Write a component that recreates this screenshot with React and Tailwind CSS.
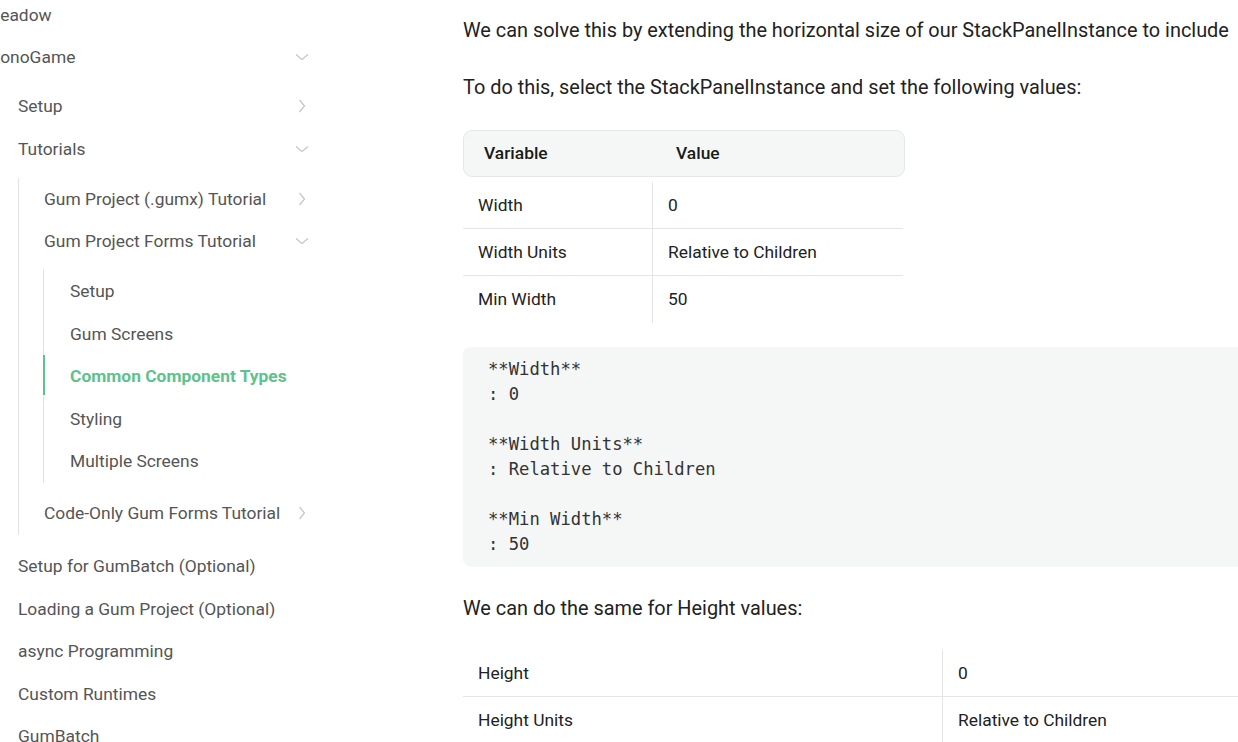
import React from 'react';

const font = { fontFamily: 'Roboto, "Liberation Sans", sans-serif' };

const ChevronDown = () => (
  <svg width="14" height="8" viewBox="0 0 14 8" fill="none" stroke="#c4c4c4" strokeWidth="1.2">
    <path d="M1 1.5l6 5 6-5" />
  </svg>
);

const ChevronRight = () => (
  <svg width="8" height="14" viewBox="0 0 8 14" fill="none" stroke="#c4c4c4" strokeWidth="1.2">
    <path d="M1.5 1l5 6-5 6" />
  </svg>
);

const Item = ({ label, indent, chevron, active }) => (
  <div className={`relative flex h-[42.5px] items-center justify-between ${indent}`}>
    {active && <span className="absolute left-0 top-[0px] h-[40px] w-[2px] bg-[#5ec28d]" />}
    <span
      className={`whitespace-nowrap text-[17.4px] ${active ? 'font-bold text-[#5ec28d]' : 'text-[#555]'}`}
    >
      {label}
    </span>
    <span className="flex w-[16px] justify-center">
      {chevron === 'down' && <ChevronDown />}
      {chevron === 'right' && <ChevronRight />}
    </span>
  </div>
);

const Sidebar = () => (
  <aside className="-ml-[15px] -mt-[6.5px] w-[325px] shrink-0">
    <Item label="Meadow" />
    <Item label="MonoGame" chevron="down" />
    <div className="ml-[33px] mt-[6.5px]">
      <Item label="Setup" chevron="right" />
      <Item label="Tutorials" chevron="down" />
      <div className="mb-[10.5px] mt-[7.5px] border-l border-[#e2e2e2] pl-[25px]">
        <Item label="Gum Project (.gumx) Tutorial" chevron="right" />
        <Item label="Gum Project Forms Tutorial" chevron="down" />
        <div className="mb-[9.5px] mt-[7.5px] -ml-[1px] border-l border-[#e2e2e2]">
          <Item label="Setup" indent="pl-[26px]" />
          <Item label="Gum Screens" indent="pl-[26px]" />
          <div className="-ml-[1px]">
            <Item label="Common Component Types" indent="pl-[27px]" active />
          </div>
          <Item label="Styling" indent="pl-[26px]" />
          <Item label="Multiple Screens" indent="pl-[26px]" />
        </div>
        <Item label="Code-Only Gum Forms Tutorial" chevron="right" />
      </div>
      <Item label="Setup for GumBatch (Optional)" />
      <Item label="Loading a Gum Project (Optional)" />
      <Item label="async Programming" />
      <Item label="Custom Runtimes" />
      <Item label="GumBatch" />
    </div>
  </aside>
);

const widthRows = [
  ['Width', '0'],
  ['Width Units', 'Relative to Children'],
  ['Min Width', '50'],
];

const heightRows = [
  ['Height', '0'],
  ['Height Units', 'Relative to Children'],
];

const codeLines = [
  '**Width**',
  ': 0',
  '',
  '**Width Units**',
  ': Relative to Children',
  '',
  '**Min Width**',
  ': 50',
];

export default function App() {
  return (
    <div className="h-[742px] w-[1238px] overflow-hidden bg-white" style={font}>
      <div className="flex">
        <Sidebar />
        <main className="ml-[153px] w-[830px] shrink-0 text-[#222]">
          <p className="mt-[19px] whitespace-nowrap text-[19.9px] leading-[24px]">
            We can solve this by extending the horizontal size of our StackPanelInstance to include
          </p>
          <p className="mt-[33px] whitespace-nowrap text-[19.9px] leading-[24px]">
            To do this, select the StackPanelInstance and set the following values:
          </p>

          {/* Width table */}
          <div className="mt-[30px] w-[442px]">
            <div className="flex h-[47px] items-center rounded-[9px] border border-[#e6e8e8] bg-[#f5f6f6] text-[17.4px] font-medium text-[#1a1a1a]">
              <span className="w-[212px] pl-[20px]">Variable</span>
              <span>Value</span>
            </div>
            <div className="mt-[5px]">
              {widthRows.map(([k, v], i) => (
                <div
                  key={k}
                  className={`flex h-[47px] w-[440px] text-[17.4px] text-[#222] ${i < widthRows.length - 1 ? 'border-b border-[#e5e5e5]' : ''}`}
                >
                  <div className="flex w-[190px] items-center border-r border-[#e5e5e5] pl-[15px]">{k}</div>
                  <div className="flex items-center pl-[15px]">{v}</div>
                </div>
              ))}
            </div>
          </div>

          {/* Code block */}
          <pre
            className="mt-[24px] w-[800px] rounded-[8px] bg-[#f5f6f6] py-[10px] pl-[25px] text-[17.2px] leading-[25px] text-[#333]"
            style={{ fontFamily: '"DejaVu Sans Mono", "Liberation Mono", monospace' }}
          >
            {codeLines.map((l, i) => (
              <div key={i} className="h-[25px]">{l}</div>
            ))}
          </pre>

          <p className="mt-[30px] whitespace-nowrap text-[19.9px] leading-[24px]">
            We can do the same for Height values:
          </p>

          {/* Height table */}
          <div className="mt-[29px] w-[830px]">
            {heightRows.map(([k, v], i) => (
              <div
                key={k}
                className={`flex h-[47px] text-[17.4px] text-[#222] ${i < heightRows.length - 1 ? 'border-b border-[#e5e5e5]' : ''}`}
              >
                <div className="flex w-[480px] items-center border-r border-[#e5e5e5] pl-[15px]">{k}</div>
                <div className="flex items-center pl-[15px]">{v}</div>
              </div>
            ))}
          </div>
        </main>
      </div>
    </div>
  );
}
